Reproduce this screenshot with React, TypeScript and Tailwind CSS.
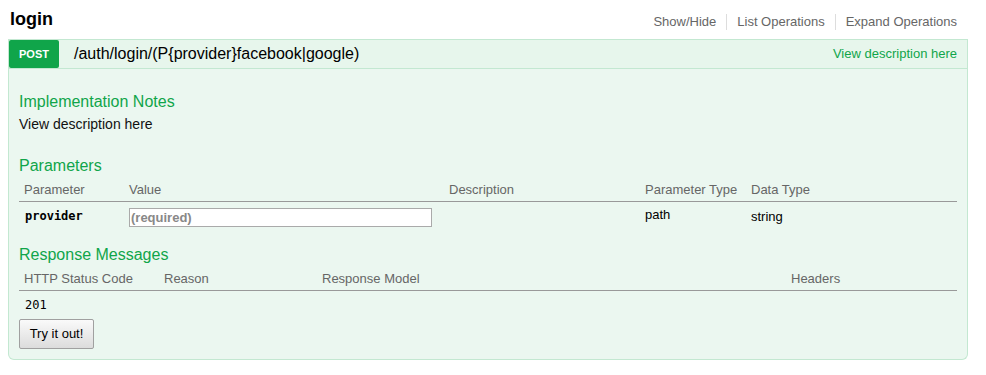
import React from "react";

const sans = { fontFamily: '"Liberation Sans", Arial, sans-serif' } as const;

export default function App() {
  return (
    <div
      className="w-[986px] h-[375px] bg-white text-black overflow-hidden"
      style={sans}
    >
      <div className="ml-[8px] w-[960px]">
        {/* Resource header */}
        <div className="flex justify-between h-[39px]">
          <h2 className="mt-[9px] pl-[2px] text-[18px] leading-[20px] font-bold text-black">
            login
          </h2>
          <ul className="flex mt-[14px] h-[16px] text-[13px] leading-[16px] text-[#666]">
            <li className="px-[10px] border-r border-[#ddd]">Show/Hide</li>
            <li className="px-[10px] border-r border-[#ddd]">List Operations</li>
            <li className="pl-[10px] pr-[11px]">Expand Operations</li>
          </ul>
        </div>

        {/* Operation heading */}
        <div className="flex items-center h-[30px] border border-[#c3e8d1] bg-[#e7f6ec]">
          <span className="flex items-center justify-center w-[50px] h-[28px] rounded-[2px] bg-[#10a54a] text-white text-[11px] font-bold">
            POST
          </span>
          <span className="pl-[15px] text-[16px] leading-[18px] text-black -mt-[1px]">
            /auth/login/(P{"{"}provider{"}"}facebook|google)
          </span>
          <span className="ml-auto pr-[10px] text-[13px] leading-[16px] text-[#10a54a] -mt-[1px]">
            View description here
          </span>
        </div>

        {/* Operation content */}
        <div className="border border-t-0 border-[#c3e8d1] bg-[#ebf7f0] rounded-b-[6px] px-[10px] pt-[24px] pb-[10px]">
          <h4 className="text-[16px] leading-[18px] text-[#10a54a]">
            Implementation Notes
          </h4>
          <p className="mt-[5px] text-[14px] leading-[16px] text-[#111]">
            View description here
          </p>

          <h4 className="mt-[25px] text-[16px] leading-[18px] text-[#10a54a]">
            Parameters
          </h4>
          <div className="mt-[7px] grid grid-cols-[105px_320px_196px_106px_1fr] text-[13px] leading-[16px] text-[#666] border-b border-[#999] pb-[3px]">
            <div className="px-[5px]">Parameter</div>
            <div className="px-[5px]">Value</div>
            <div className="px-[5px]">Description</div>
            <div className="px-[5px]">Parameter Type</div>
            <div className="px-[5px]">Data Type</div>
          </div>
          <div className="grid grid-cols-[105px_320px_196px_106px_1fr] items-start h-[29px] text-[13px] leading-[16px] text-black">
            <div
              className="px-[5px] pl-[6px] pt-[7px] text-[12px] leading-[14px] font-bold"
              style={{ fontFamily: '"DejaVu Sans Mono", monospace' }}
            >
              provider
            </div>
            <div className="px-[5px] pt-[6px]">
              <input
                className="block w-[303px] h-[19px] border border-[#aaa] bg-white px-[1px] text-[13px] font-bold outline-none placeholder:text-[#888]"
                style={sans}
                placeholder="(required)"
                readOnly
              />
            </div>
            <div className="px-[5px]"></div>
            <div className="px-[5px] pt-[5px]">path</div>
            <div className="px-[5px] pt-[7px]">string</div>
          </div>

          <h4 className="mt-[15px] text-[16px] leading-[18px] text-[#10a54a]">
            Response Messages
          </h4>
          <div className="mt-[7px] grid grid-cols-[140px_158px_469px_1fr] text-[13px] leading-[16px] text-[#666] border-b border-[#999] pb-[3px]">
            <div className="px-[5px]">HTTP Status Code</div>
            <div className="px-[5px]">Reason</div>
            <div className="px-[5px]">Response Model</div>
            <div className="px-[5px]">Headers</div>
          </div>
          <div className="pt-[7px] pb-[3px]">
            <div
              className="pl-[6px] text-[12px] leading-[14px]"
              style={{ fontFamily: '"DejaVu Sans Mono", monospace' }}
            >
              201
            </div>
          </div>
          <button
            className="mt-[4px] block w-[75px] h-[30px] border border-[#a0a0a0] rounded-[2px] bg-gradient-to-b from-[#fafafa] to-[#dcdcdc] text-[13px] text-black"
            style={sans}
          >
            Try it out!
          </button>
        </div>
      </div>
    </div>
  );
}
